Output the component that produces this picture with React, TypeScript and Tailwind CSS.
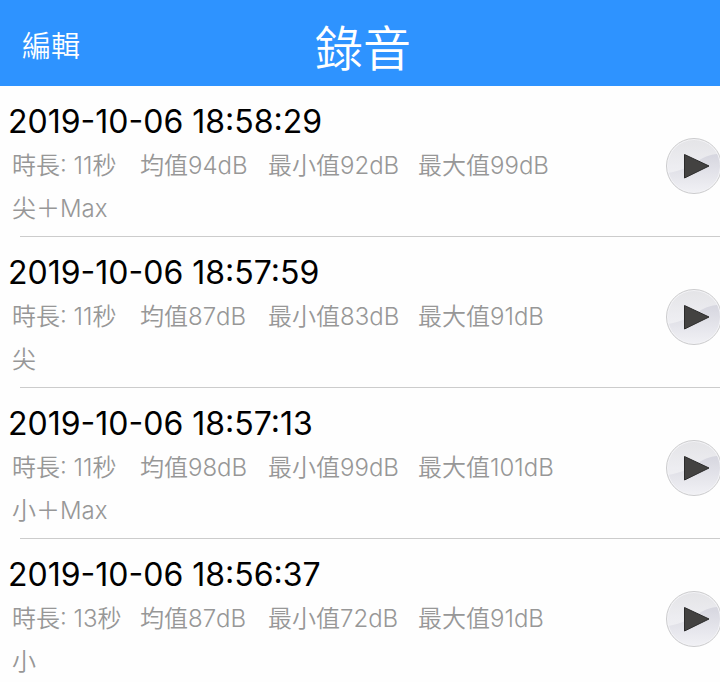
import React from 'react';

interface Recording {
  recordedAt: string;
  duration: string;
  avg: string;
  min: string;
  max: string;
  note: string;
}

const recordings: Recording[] = [
  { recordedAt: '2019-10-06 18:58:29', duration: '11秒', avg: '94dB', min: '92dB', max: '99dB', note: '尖＋Max' },
  { recordedAt: '2019-10-06 18:57:59', duration: '11秒', avg: '87dB', min: '83dB', max: '91dB', note: '尖' },
  { recordedAt: '2019-10-06 18:57:13', duration: '11秒', avg: '98dB', min: '99dB', max: '101dB', note: '小＋Max' },
  { recordedAt: '2019-10-06 18:56:37', duration: '13秒', avg: '87dB', min: '72dB', max: '91dB', note: '小' },
];

const PlayIcon: React.FC = () => (
  <svg viewBox="0 0 56 56" className="w-14 h-14" aria-hidden="true">
    <defs>
      <linearGradient id="disc" x1="0" y1="0" x2="0" y2="1">
        <stop offset="0" stopColor="#e4e4e7" />
        <stop offset="0.5" stopColor="#ededf1" />
        <stop offset="1" stopColor="#f3f3f6" />
      </linearGradient>
      <linearGradient id="shade" x1="0" y1="0" x2="0" y2="1">
        <stop offset="0" stopColor="#d6d6df" />
        <stop offset="1" stopColor="#f1f1f5" />
      </linearGradient>
    </defs>
    <circle cx="28" cy="28" r="27" fill="url(#disc)" />
    <path d="M2 35 C16 33 26 27 35 21 C42 17 49 16 52 16 C58 30 52 54 28 55 C14 55 4 46 2 35 Z" fill="url(#shade)" />
    <circle cx="28" cy="28" r="26.5" fill="none" stroke="#f4f4f7" />
    <circle cx="28" cy="28" r="27.5" fill="none" stroke="#cbcbcd" />
    <path d="M18.5 16.5 L43 28 L18.5 40 Z" fill="#434241" stroke="#2b2b2b" />
  </svg>
);

const RecordingRow: React.FC<{ item: Recording }> = ({ item }) => (
  <li className="group pl-2">
    <div className="flex items-center justify-between pt-3.5 pb-1.5">
      <div className="min-w-0 whitespace-nowrap">
        <h2 className="text-[32px] leading-[44px] text-black">{item.recordedAt}</h2>
        <div className="flex pl-1 text-2xl leading-[43px] font-[350] text-[#979797]">
          <span className="w-32">時長: {item.duration}</span>
          <span className="w-32">均值{item.avg}</span>
          <span className="w-[150px]">最小值{item.min}</span>
          <span>最大值{item.max}</span>
        </div>
        <p className="pl-1 text-2xl leading-[43px] font-[350] text-[#979797]">{item.note}</p>
      </div>
      <button type="button" aria-label={`播放 ${item.recordedAt}`} className="shrink-0 -mr-0.5 mt-0.5">
        <PlayIcon />
      </button>
    </div>
    <div className="ml-3 h-px bg-[#cccccc] group-last:hidden" />
  </li>
);

export default function App() {
  return (
    <div className="min-h-screen overflow-hidden bg-[#fefefe] font-['Inter','Noto_Sans_CJK_TC',sans-serif]">
      <header className="grid grid-cols-3 items-center h-[86px] pt-2 pl-5.5 pr-4 bg-[#2e93ff] text-white">
        <button type="button" className="justify-self-start text-[29px] font-[350]">編輯</button>
        <h1 className="pt-1 text-center text-5xl font-[350]">錄音</h1>
      </header>
      <ul>
        {recordings.map((item) => (
          <RecordingRow key={item.recordedAt} item={item} />
        ))}
      </ul>
    </div>
  );
}
